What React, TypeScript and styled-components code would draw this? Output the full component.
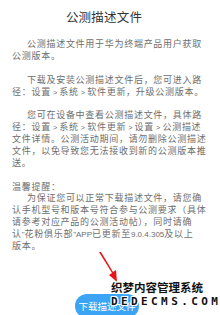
import React from "react";
import styled, { createGlobalStyle } from "styled-components";

const GlobalStyle = createGlobalStyle`
  html, body {
    margin: 0;
    padding: 0;
    background: #ffffff;
  }
  body {
    font-family: "Liberation Sans", "Noto Sans CJK SC", sans-serif;
  }
`;

const Page = styled.div`
  position: relative;
  width: 220px;
  height: 315px;
  overflow: hidden;
  background: #ffffff;
`;

const Content = styled.div`
  width: 192px;
  padding: 10px 0 0 12px;
  display: flex;
  flex-direction: column;
`;

const Title = styled.h1`
  margin: 0 0 13px;
  font-size: 12.5px;
  line-height: 16px;
  font-weight: 400;
  letter-spacing: 0.2px;
  color: #333333;
  text-align: center;
  padding-right: 8px;
`;

const Para = styled.p<{ $indent?: boolean; $gap?: boolean }>`
  margin: 0 0 ${(p) => (p.$gap ? "11.8px" : "0")};
  font-size: 9px;
  line-height: 11.9px;
  letter-spacing: 0.72px;
  color: #6e6e6e;
  white-space: nowrap;
  text-indent: ${(p) => (p.$indent ? "15px" : "0")};
`;

/* latin runs: natural spacing, a touch smaller like the source */
const Latin = styled.span<{ $size?: number }>`
  letter-spacing: 0;
  font-size: ${(p) => p.$size ?? 8}px;
`;

const ButtonRow = styled.div`
  display: flex;
  justify-content: center;
  margin-top: 41px;
  padding-right: 2px;
`;

const DownloadButton = styled.button`
  width: 64px;
  height: 24px;
  border: none;
  border-radius: 12px;
  background: #3ba4f4;
  color: #ffffff;
  font-family: "Noto Sans CJK SC", sans-serif;
  font-size: 9.5px;
  padding: 0;
`;

const Watermark = styled.div`
  position: absolute;
  left: 111px;
  top: 280px;
  display: flex;
  flex-direction: column;
  pointer-events: none;
`;

const MarkCn = styled.span`
  font-family: "Noto Sans CJK SC", sans-serif;
  font-weight: 700;
  font-size: 11.5px;
  line-height: 15px;
  color: #111111;
  text-shadow: 1px 0 0 #fff, -1px 0 0 #fff, 0 1px 0 #fff, 0 -1px 0 #fff,
    1px 1px 0 #fff, -1px -1px 0 #fff, 1px -1px 0 #fff, -1px 1px 0 #fff;
`;

const MarkEn = styled.span`
  font-family: "DejaVu Sans Mono", monospace;
  font-weight: 700;
  font-size: 11px;
  line-height: 13px;
  letter-spacing: 3.4px;
  color: #111111;
  text-shadow: 1px 0 0 #fff, -1px 0 0 #fff, 0 1px 0 #fff, 0 -1px 0 #fff,
    1px 1px 0 #fff, -1px -1px 0 #fff, 1px -1px 0 #fff, -1px 1px 0 #fff;
`;

const Arrow = styled.svg`
  position: absolute;
  left: 96px;
  top: 250px;
`;

const Gt = () => <Latin $size={7.4}> &gt; </Latin>;

export default function App() {
  return (
    <Page>
      <GlobalStyle />
      <Content>
        <Title>公测描述文件</Title>
        <Para $indent $gap>
          公测描述文件用于华为终端产品用户获取
          <br />
          公测版本。
        </Para>
        <Para $indent $gap>
          下载及安装公测描述文件后，您可进入路
          <br />
          径：设置<Gt />系统<Gt />软件更新，升级公测版本。
        </Para>
        <Para $indent $gap>
          您可在设备中查看公测描述文件，具体路
          <br />
          径：设置<Gt />系统<Gt />软件更新<Gt />设置<Gt />公测描述
          <br />
          文件详情。公测活动期间，请勿删除公测描述
          <br />
          文件，以免导致您无法接收到新的公测版本推
          <br />
          送。
        </Para>
        <Para>温馨提醒：</Para>
        <Para $indent>
          为保证您可以正常下载描述文件，请您确
          <br />
          认手机型号和版本号符合参与公测要求（具体
          <br />
          请参考对应产品的公测活动帖），同时请确
          <br />
          认<Latin>"</Latin>花粉俱乐部<Latin>"APP</Latin>已更新至
          <Latin>9.0.4.305</Latin>及以上
          <br />
          版本。
        </Para>
        <ButtonRow>
          <DownloadButton>下载描述文件</DownloadButton>
        </ButtonRow>
      </Content>
      <Arrow width="26" height="34" viewBox="0 0 26 34">
        <polygon points="3,2 5,2 17,22 20,20 21,32 13,25 16,23" fill="#e8141c" />
      </Arrow>
      <Watermark>
        <MarkCn>织梦内容管理系统</MarkCn>
        <MarkEn>DEDECMS.COM</MarkEn>
      </Watermark>
    </Page>
  );
}
